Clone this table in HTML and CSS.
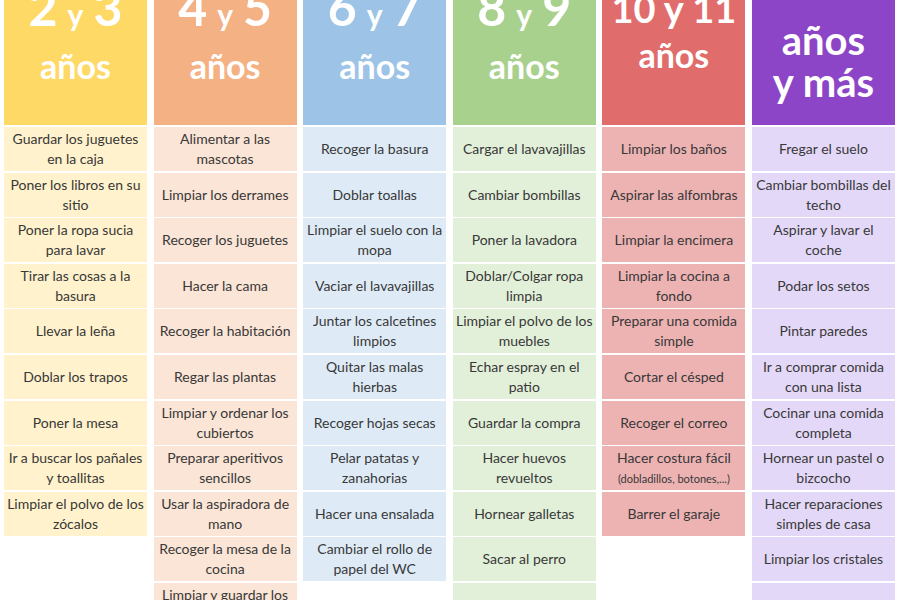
FILE: index.html
```html
<!DOCTYPE html>
<html lang="es">
<head>
<meta charset="utf-8">
<title>Tareas del hogar por edad</title>
<link rel="stylesheet" href="styles.css">
</head>
<body>
<main class="board">
  <section class="col c1">
    <header class="head">
      <div class="big">2<span class="y">y</span>3</div>
      <div class="label">años</div>
    </header>
    <div class="cell"><p>Guardar los juguetes<br>en la caja</p></div>
    <div class="cell"><p>Poner los libros en su<br>sitio</p></div>
    <div class="cell"><p>Poner la ropa sucia<br>para lavar</p></div>
    <div class="cell"><p>Tirar las cosas a la<br>basura</p></div>
    <div class="cell"><p>Llevar la leña</p></div>
    <div class="cell"><p>Doblar los trapos</p></div>
    <div class="cell"><p>Poner la mesa</p></div>
    <div class="cell"><p>Ir a buscar los pañales<br>y toallitas</p></div>
    <div class="cell"><p>Limpiar el polvo de los<br>zócalos</p></div>
  </section>
  <section class="col c2">
    <header class="head">
      <div class="big">4<span class="y">y</span>5</div>
      <div class="label">años</div>
    </header>
    <div class="cell"><p>Alimentar a las<br>mascotas</p></div>
    <div class="cell"><p>Limpiar los derrames</p></div>
    <div class="cell"><p>Recoger los juguetes</p></div>
    <div class="cell"><p>Hacer la cama</p></div>
    <div class="cell"><p>Recoger la habitación</p></div>
    <div class="cell"><p>Regar las plantas</p></div>
    <div class="cell"><p>Limpiar y ordenar los<br>cubiertos</p></div>
    <div class="cell"><p>Preparar aperitivos<br>sencillos</p></div>
    <div class="cell"><p>Usar la aspiradora de<br>mano</p></div>
    <div class="cell"><p>Recoger la mesa de la<br>cocina</p></div>
    <div class="cell"><p>Limpiar y guardar los<br>platos</p></div>
  </section>
  <section class="col c3">
    <header class="head">
      <div class="big">6<span class="y">y</span>7</div>
      <div class="label">años</div>
    </header>
    <div class="cell"><p>Recoger la basura</p></div>
    <div class="cell"><p>Doblar toallas</p></div>
    <div class="cell"><p>Limpiar el suelo con la<br>mopa</p></div>
    <div class="cell"><p>Vaciar el lavavajillas</p></div>
    <div class="cell"><p>Juntar los calcetines<br>limpios</p></div>
    <div class="cell"><p>Quitar las malas<br>hierbas</p></div>
    <div class="cell"><p>Recoger hojas secas</p></div>
    <div class="cell"><p>Pelar patatas y<br>zanahorias</p></div>
    <div class="cell"><p>Hacer una ensalada</p></div>
    <div class="cell"><p>Cambiar el rollo de<br>papel del WC</p></div>
  </section>
  <section class="col c4">
    <header class="head">
      <div class="big">8<span class="y">y</span>9</div>
      <div class="label">años</div>
    </header>
    <div class="cell"><p>Cargar el lavavajillas</p></div>
    <div class="cell"><p>Cambiar bombillas</p></div>
    <div class="cell"><p>Poner la lavadora</p></div>
    <div class="cell"><p>Doblar/Colgar ropa<br>limpia</p></div>
    <div class="cell"><p>Limpiar el polvo de los<br>muebles</p></div>
    <div class="cell"><p>Echar espray en el<br>patio</p></div>
    <div class="cell"><p>Guardar la compra</p></div>
    <div class="cell"><p>Hacer huevos<br>revueltos</p></div>
    <div class="cell"><p>Hornear galletas</p></div>
    <div class="cell"><p>Sacar al perro</p></div>
    <div class="cell"><p>Barrer el porche</p></div>
  </section>
  <section class="col c5">
    <header class="head head-mid">
      <div class="mid">10 y 11</div>
      <div class="label label-mid">años</div>
    </header>
    <div class="cell"><p>Limpiar los baños</p></div>
    <div class="cell"><p>Aspirar las alfombras</p></div>
    <div class="cell"><p>Limpiar la encimera</p></div>
    <div class="cell"><p>Limpiar la cocina a<br>fondo</p></div>
    <div class="cell"><p>Preparar una comida<br>simple</p></div>
    <div class="cell"><p>Cortar el césped</p></div>
    <div class="cell"><p>Recoger el correo</p></div>
    <div class="cell"><p>Hacer costura fácil<br><span class="small">(dobladillos, botones,...)</span></p></div>
    <div class="cell"><p>Barrer el garaje</p></div>
  </section>
  <section class="col c6">
    <header class="head head-last">
      <div class="label label-last">años<br>y más</div>
    </header>
    <div class="cell"><p>Fregar el suelo</p></div>
    <div class="cell"><p>Cambiar bombillas del<br>techo</p></div>
    <div class="cell"><p>Aspirar y lavar el<br>coche</p></div>
    <div class="cell"><p>Podar los setos</p></div>
    <div class="cell"><p>Pintar paredes</p></div>
    <div class="cell"><p>Ir a comprar comida<br>con una lista</p></div>
    <div class="cell"><p>Cocinar una comida<br>completa</p></div>
    <div class="cell"><p>Hornear un pastel o<br>bizcocho</p></div>
    <div class="cell"><p>Hacer reparaciones<br>simples de casa</p></div>
    <div class="cell"><p>Limpiar los cristales</p></div>
    <div class="cell"><p>Planchar ropa</p></div>
  </section>
</main>
</body>
</html>
```
FILE: styles.css
```css
html, body {
  margin: 0;
  padding: 0;
  background: #ffffff;
  overflow: hidden;
}

body {
  font-family: "Lato", "Liberation Sans", sans-serif;
  color: #383838;
}

.board {
  display: grid;
  grid-template-columns: repeat(6, 143px);
  column-gap: 6.6px;
  margin: -30px 0 0 4px;
  align-items: start;
}

.col {
  display: flex;
  flex-direction: column;
  gap: 1.6px;
}

.head {
  height: 155px;
  box-sizing: border-box;
  padding-top: 12px;
  margin-bottom: 0.4px;
  display: flex;
  flex-direction: column;
  align-items: center;
  color: #ffffff;
  font-weight: 700;
}

.big {
  font-size: 50px;
  line-height: 50px;
  display: flex;
  align-items: baseline;
}

.big .y {
  font-size: 30px;
  margin: 0 10px;
}

.label {
  font-size: 34px;
  line-height: 40px;
  margin-top: 7px;
}

.head-mid {
  padding-top: 18px;
}

.mid {
  font-size: 38px;
  line-height: 40px;
}

.label-mid {
  margin-top: 7px;
}

.head-last {
  padding-top: 49px;
}

.label-last {
  font-size: 40px;
  line-height: 42px;
  margin-top: 0;
  text-align: center;
}

.cell {
  height: 44px;
  display: flex;
  align-items: center;
  justify-content: center;
  text-align: center;
  font-size: 14px;
  line-height: 20px;
  white-space: nowrap;
}

.cell p {
  margin: 0;
}

.small {
  font-size: 11px;
}

.c1 .head { background: #ffd966; }
.c1 .cell { background: #fff2cc; }
.c2 .head { background: #f4b183; }
.c2 .cell { background: #fbe5d6; }
.c3 .head { background: #9dc3e6; }
.c3 .cell { background: #deebf7; }
.c4 .head { background: #a9d18e; }
.c4 .cell { background: #e2f0d9; }
.c5 .head { background: #e06c6c; }
.c5 .cell { background: #edb3b3; }
.c6 .head { background: #8c45c6; }
.c6 .cell { background: #e4d8f8; }
```
